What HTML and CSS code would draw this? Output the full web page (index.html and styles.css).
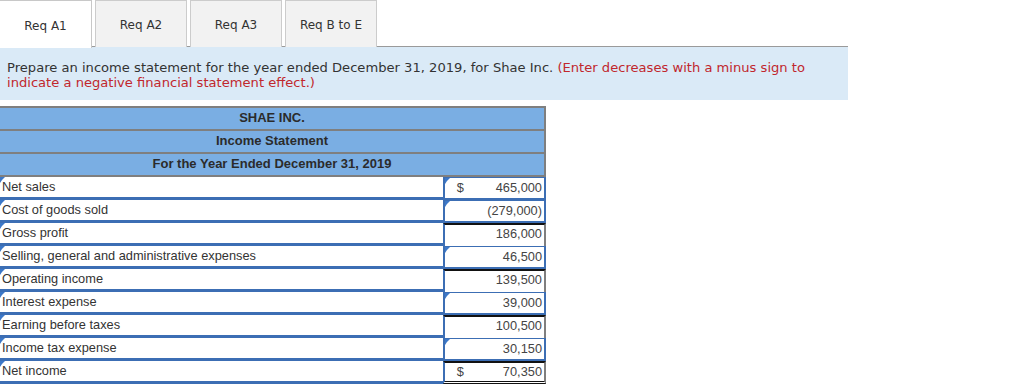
FILE: index.html
```html
<!DOCTYPE html>
<html>
<head>
<meta charset="utf-8">
<link rel="stylesheet" href="styles.css">
</head>
<body>
<div class="tabs">
  <div class="tab active">Req A1</div>
  <div class="tab">Req A2</div>
  <div class="tab">Req A3</div>
  <div class="tab">Req B to E</div>
</div>
<div class="instr">
  Prepare an income statement for the year ended December 31, 2019, for Shae Inc. <span class="red">(Enter decreases with a minus sign to indicate a negative financial statement effect.)</span>
</div>
<div class="sheet">
  <div class="head">SHAE INC.</div>
  <div class="head">Income Statement</div>
  <div class="head">For the Year Ended December 31, 2019</div>

  <div class="row">
    <div class="label input">Net sales</div>
    <div class="val input"><span class="cur">$</span><span class="num">465,000</span></div>
  </div>
  <div class="row">
    <div class="label input">Cost of goods sold</div>
    <div class="val input"><span class="num">(279,000)</span></div>
  </div>
  <div class="row">
    <div class="label input">Gross profit</div>
    <div class="val calc"><span class="num">186,000</span></div>
  </div>
  <div class="row">
    <div class="label input">Selling, general and administrative expenses</div>
    <div class="val input"><span class="num">46,500</span></div>
  </div>
  <div class="row">
    <div class="label input">Operating income</div>
    <div class="val calc"><span class="num">139,500</span></div>
  </div>
  <div class="row">
    <div class="label input">Interest expense</div>
    <div class="val input"><span class="num">39,000</span></div>
  </div>
  <div class="row">
    <div class="label input">Earning before taxes</div>
    <div class="val calc"><span class="num">100,500</span></div>
  </div>
  <div class="row">
    <div class="label input">Income tax expense</div>
    <div class="val input"><span class="num">30,150</span></div>
  </div>
  <div class="row">
    <div class="label input">Net income</div>
    <div class="val calc total"><span class="cur">$</span><span class="num">70,350</span></div>
  </div>
</div>
</body>
</html>
```

FILE: styles.css
```css
html, body {
  margin: 0;
  padding: 0;
  background: #fff;
}
body {
  font-family: "DejaVu Sans", Verdana, sans-serif;
  color: #333;
}
.tabs {
  display: flex;
  gap: 3px;
  height: 47px;
  width: 848px;
}
.tab {
  width: 90px;
  height: 46px;
  border: 1px solid #cccccc;
  border-bottom: none;
  background: #f2f2f2;
  font-size: 12px;
  display: flex;
  align-items: center;
  justify-content: center;
  padding-top: 2px;
  box-sizing: border-box;
  height: 47px;
  width: 92px;
  color: #333;
}
.tab.active {
  background: #fff;
  border-color: #c8c8c8;
  border-left: none;
  width: 92px;
  position: relative;
  z-index: 1;
  height: 48px;
}
.instr {
  width: 830px;
  border-top: 1px solid #9a9a9a;
  background: #daeaf7;
  padding: 13px 11px 0 7px;
  box-sizing: content-box;
  height: 40px;
  font-size: 13.1px;
  line-height: 15px;
  color: #333;
  margin-top: -1px;
}
.red {
  color: #c1272d;
}
.sheet {
  margin-top: 6px;
  width: 546px;
  font-family: "Liberation Sans", Arial, sans-serif;
  font-size: 13px;
  color: #333;
}
.head {
  height: 21px;
  background: #7aaee3;
  border-top: 2px solid #7f7f7f;
  border-right: 2px solid #7f7f7f;
  font-weight: bold;
  text-align: center;
  line-height: 20px;
  font-size: 13px;
  color: #2b2b2b;
}
.head + .row {
  border-top: 2px solid #7f7f7f;
}
.row {
  display: flex;
  height: 23px;
}
.label {
  width: 444px;
  height: 20px;
  border-bottom: 3px solid #3c6eb4;
  line-height: 20px;
  padding-left: 2px;
  position: relative;
  color: #333;
  font-size: 12.8px;
}
.input::before {
  content: "";
  position: absolute;
  left: 0;
  top: 0;
  border-top: 3px solid #3c78c8;
  border-right: 3px solid transparent;
  border-left: 2px solid #3c78c8;
  border-bottom: 3px solid transparent;
  width: 0;
  height: 0;
}
.val {
  width: 96px;
  position: relative;
  display: flex;
  align-items: center;
  color: #444;
  font-size: 12.8px;
}
.val.input {
  border: 2px solid #3c6eb4;
  border-top: 1px solid #3c6eb4;
  height: 18px;
  width: 94px;
  padding: 0 2px 2px 4px;
}
.val.calc {
  border-top: 2px solid #111;
  border-left: 2px solid #3c6eb4;
  border-right: 2px solid #7f7f7f;
  height: 16px;
  padding: 0 2px 5px 4px;
  width: 94px;
}
.val.total {
  border-bottom: 3px double #111;
  height: 16px;
  padding-bottom: 2px;
}
.cur {
  margin-left: 8px;
}
.num {
  margin-left: auto;
}
```
